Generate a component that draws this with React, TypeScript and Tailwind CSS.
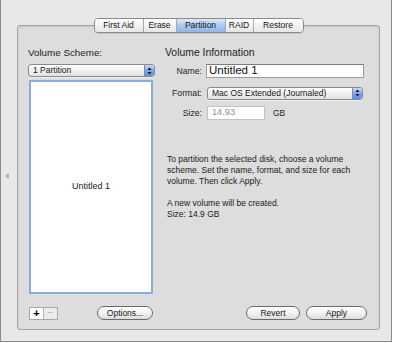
import React from 'react';

const font = { fontFamily: '"Liberation Sans", Arial, sans-serif' };

const tabs = [
  { label: 'First Aid', w: 'w-[48px]' },
  { label: 'Erase', w: 'w-[33px]' },
  { label: 'Partition', w: 'w-[49px]', active: true },
  { label: 'RAID', w: 'w-[28px]' },
  { label: 'Restore', w: 'w-[50px]' },
];

// little aqua up/down arrows on the right of a popup button
const PopupArrows: React.FC = () => (
  <div className="w-[10px] h-full flex items-center justify-center bg-gradient-to-b from-[#c7dcf6] via-[#7eaae6] to-[#5b8fdc] rounded-r-[3px] border-l border-[#6f8fbf]">
    <svg width="5" height="8" viewBox="0 0 5 8">
      <path d="M2.5 0.5 L4.5 3 L0.5 3 Z" fill="#111" />
      <path d="M2.5 7.5 L4.5 5 L0.5 5 Z" fill="#111" />
    </svg>
  </div>
);

const Popup: React.FC<{ label: string; className?: string }> = ({ label, className = '' }) => (
  <div className={`h-[13px] flex items-stretch rounded-[3px] border border-[#8a8a8a] bg-gradient-to-b from-white to-[#e2e2e2] shadow-[0_1px_0_rgba(255,255,255,0.6)] ${className}`}>
    <div className="flex-1 flex items-center pl-[4px] text-[8.5px] text-[#151515] leading-none">{label}</div>
    <PopupArrows />
  </div>
);

const PillButton: React.FC<{ label: string; className?: string }> = ({ label, className = '' }) => (
  <div className={`h-[14px] flex items-center justify-center rounded-full border border-[#6a6a6a] bg-gradient-to-b from-white via-[#f2f2f2] to-[#dcdcdc] text-[8.5px] text-[#151515] leading-none ${className}`}>
    {label}
  </div>
);

const App: React.FC = () => {
  return (
    <div style={font} className="relative w-[392px] h-[342px] bg-[#e8e8e8] border-l border-r border-b border-[#8c8c8c] pt-[18px] pl-[16px]">
      {/* splitter grip */}
      <div className="absolute left-[5px] top-[174px] w-[3px] h-[4px] bg-[#b4b4b4]" />

      <div className="w-[363px] flex flex-col">
        {/* tab strip */}
        <div className="relative z-10 flex justify-center h-[15px]">
          <div className="flex h-[15px] rounded-[4px] border border-[#8a8a8a] overflow-hidden shadow-[0_1px_1px_rgba(0,0,0,0.1)]">
            {tabs.map((t, i) => (
              <div
                key={t.label}
                className={`${t.w} flex items-center justify-center text-[8.5px] leading-none text-[#161616] ${i > 0 ? 'border-l border-[#a9a9a9]' : ''} ${
                  t.active
                    ? 'bg-gradient-to-b from-[#dbe9f9] via-[#a9c9f0] to-[#8db8ec]'
                    : 'bg-gradient-to-b from-white to-[#e6e6e6]'
                }`}
              >
                {t.label}
              </div>
            ))}
          </div>
        </div>

        {/* tab box */}
        <div className="-mt-[8px] h-[305px] rounded-[3px] border border-[#a3a3a3] bg-[#dddddd] shadow-[inset_0_1px_2px_rgba(0,0,0,0.12)] flex pt-[20px] pb-[9px] pl-[10px]">
          {/* left column */}
          <div className="w-[125px] flex flex-col">
            <div className="h-[13px] leading-[13px] text-[9.8px] text-[#1e1e1e]">Volume Scheme:</div>
            <Popup label="1 Partition" className="mt-[5px] w-[127px]" />
            <div className="mt-[3px] h-[214px] ml-[1px] border-2 border-[#8eabdf] bg-white flex items-center justify-center text-[9px] text-[#1a1a1a]">
              Untitled 1
            </div>
            <div className="mt-auto flex items-center h-[14px]">
              <div className="ml-[1px] flex h-[13px] border border-[#a8a8a8]">
                <div className="w-[13px] flex items-center justify-center bg-white text-[11px] font-bold leading-none text-black">+</div>
                <div className="w-[14px] flex items-center justify-center border-l border-[#b8b8b8] bg-[#ececec] text-[10px] leading-none text-[#b0b0b0]">−</div>
              </div>
              <PillButton label="Options..." className="ml-[39px] w-[58px]" />
            </div>
          </div>

          {/* right column */}
          <div className="ml-[12px] w-[203px] flex flex-col">
            <div className="h-[13px] leading-[13px] text-[10.4px] text-[#1e1e1e]">Volume Information</div>

            <div className="mt-[5px] h-[14px] flex items-center">
              <div className="w-[37px] text-right text-[8.7px] text-[#1e1e1e] leading-none">Name:</div>
              <div className="ml-[4px] w-[158px] h-[14px] bg-white border border-[#9c9c9c] border-t-[#7c7c7c] flex items-center pl-[2px] text-[11.5px] leading-none text-[#111]">
                Untitled 1
              </div>
            </div>

            <div className="mt-[8px] h-[14px] flex items-center">
              <div className="w-[37px] text-right text-[8.7px] text-[#1e1e1e] leading-none">Format:</div>
              <Popup label="Mac OS Extended (Journaled)" className="ml-[5px] w-[156px]" />
            </div>

            <div className="mt-[6px] h-[14px] flex items-center">
              <div className="w-[37px] text-right text-[8.7px] text-[#1e1e1e] leading-none">Size:</div>
              <div className="ml-[5px] w-[58px] h-[14px] bg-white border border-[#c2c2c2] flex items-center pl-[4px] text-[9.2px] leading-none text-[#8e8e8e]">
                14.93
              </div>
              <div className="ml-[8px] text-[8.5px] leading-none text-[#1e1e1e]">GB</div>
            </div>

            <div className="mt-[34px] pl-[2px] w-[200px] text-[8.5px] leading-[11px] text-[#1a1a1a]">
              <p>To partition the selected disk, choose a volume scheme. Set the name, format, and size for each volume. Then click Apply.</p>
              <p className="mt-[11px]">A new volume will be created.</p>
              <p>Size: 14.9 GB</p>
            </div>

            <div className="mt-auto flex items-center justify-end gap-[6px] pr-[1px]">
              <PillButton label="Revert" className="w-[54px]" />
              <PillButton label="Apply" className="w-[61px]" />
            </div>
          </div>
        </div>
      </div>
    </div>
  );
};

export default App;
